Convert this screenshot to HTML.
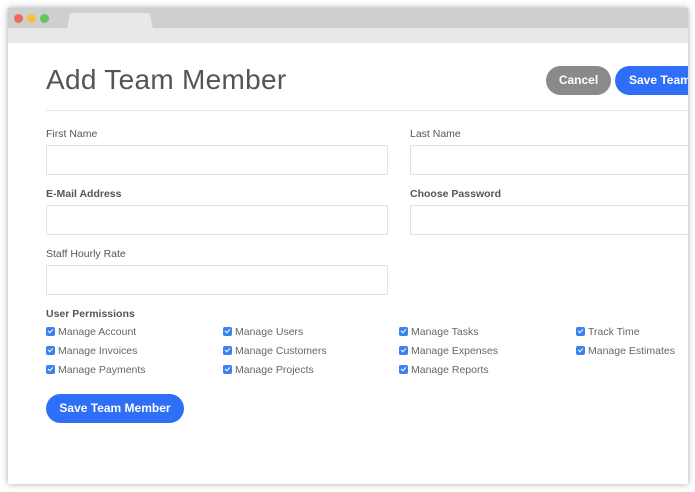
<!DOCTYPE html><html><head><style>
body{margin:0;width:695px;height:492px;background:#fff;font-family:"Liberation Sans",sans-serif;overflow:hidden;position:relative}
.win{position:absolute;left:8px;top:8px;width:680px;height:476px;background:#fff;box-shadow:0 0 6px rgba(0,0,0,.35);overflow:hidden}
.top{position:absolute;left:0;top:0;width:100%;height:20px;background:#cfcfcf}
.bar2{position:absolute;left:0;top:20px;width:100%;height:15px;background:#e8e8e8}
.tab{position:absolute;left:59px;top:5px;width:86px;height:16px;background:#e8e8e8;clip-path:polygon(4% 0,96% 0,100% 100%,0 100%)}
.dot{position:absolute;top:6px;width:9px;height:9px;border-radius:50%}
h1{position:absolute;left:38px;top:56px;margin:0;font-weight:normal;font-size:28px;color:#555;letter-spacing:.3px}
.hr{position:absolute;left:38px;top:102px;width:650px;height:1px;background:#e6e6e6}
.btn{position:absolute;border-radius:15px;color:#fff;font-size:12px;font-weight:bold;text-align:center;line-height:29px;height:29px;white-space:nowrap;overflow:hidden}
.lbl{position:absolute;font-size:10.5px;color:#555}
.b{font-weight:bold}
.in{position:absolute;height:28px;border:1px solid #e2e2e2;border-radius:2px;background:#fff}
.cb{position:absolute;font-size:10.5px;color:#666;white-space:nowrap}
.cb i{display:inline-block;width:9px;height:9px;background:#3b82f0;border-radius:2px;vertical-align:-1px;margin-right:3px;position:relative}
.cb i:after{content:"";position:absolute;left:3px;top:1px;width:2px;height:4px;border:solid #fff;border-width:0 1.3px 1.3px 0;transform:rotate(45deg)}
</style></head><body>
<div class="win">
<div class="top"></div><div class="bar2"></div><div class="tab"></div>
<div class="dot" style="left:6px;background:#ea6a5e"></div>
<div class="dot" style="left:19px;background:#f1c23f"></div>
<div class="dot" style="left:32px;background:#5fc65c"></div>
<h1>Add Team Member</h1>
<div class="hr"></div>
<div class="btn" style="left:538px;top:58px;width:65px;background:#8a8a8a">Cancel</div>
<div class="btn" style="left:607px;top:58px;width:100px;background:#2f6ef6;text-align:left;padding-left:14px">Save Team Member</div>
<div class="lbl" style="left:38px;top:120px">First Name</div>
<div class="lbl" style="left:402px;top:120px">Last Name</div>
<div class="in" style="left:38px;top:137px;width:340px"></div>
<div class="in" style="left:402px;top:137px;width:300px"></div>
<div class="lbl b" style="left:38px;top:180px">E-Mail Address</div>
<div class="lbl b" style="left:402px;top:180px">Choose Password</div>
<div class="in" style="left:38px;top:197px;width:340px"></div>
<div class="in" style="left:402px;top:197px;width:300px"></div>
<div class="lbl" style="left:38px;top:240px">Staff Hourly Rate</div>
<div class="in" style="left:38px;top:257px;width:340px"></div>
<div class="lbl b" style="left:38px;top:300px">User Permissions</div>
<div class="cb" style="left:38px;top:318px"><i></i>Manage Account</div>
<div class="cb" style="left:215px;top:318px"><i></i>Manage Users</div>
<div class="cb" style="left:391px;top:318px"><i></i>Manage Tasks</div>
<div class="cb" style="left:568px;top:318px"><i></i>Track Time</div>
<div class="cb" style="left:38px;top:337px"><i></i>Manage Invoices</div>
<div class="cb" style="left:215px;top:337px"><i></i>Manage Customers</div>
<div class="cb" style="left:391px;top:337px"><i></i>Manage Expenses</div>
<div class="cb" style="left:568px;top:337px"><i></i>Manage Estimates</div>
<div class="cb" style="left:38px;top:356px"><i></i>Manage Payments</div>
<div class="cb" style="left:215px;top:356px"><i></i>Manage Projects</div>
<div class="cb" style="left:391px;top:356px"><i></i>Manage Reports</div>
<div class="btn" style="left:38px;top:386px;width:138px;background:#2f6ef6">Save Team Member</div>
</div>
</body></html>
